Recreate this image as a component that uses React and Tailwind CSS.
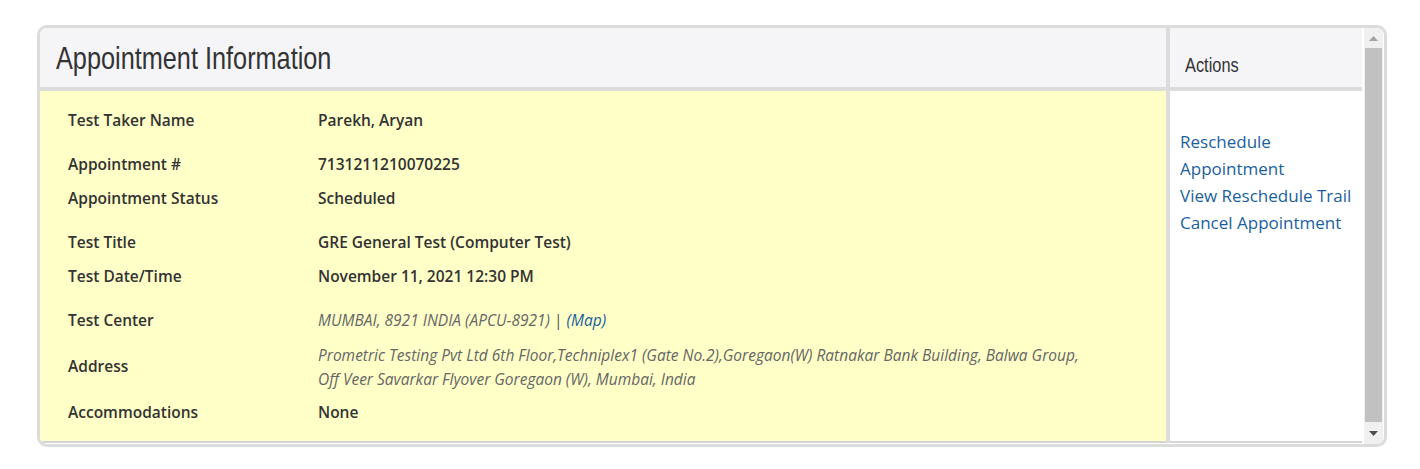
export default function App() {
  const body = { fontFamily: '"Open Sans", "Noto Sans", sans-serif' };
  const cond = { fontFamily: '"Liberation Sans", Arial, sans-serif' };
  const rows = [
    { label: "Test Taker Name", value: "Parekh, Aryan", extra: false },
    { label: "Appointment #", value: "7131211210070225", extra: true },
    { label: "Appointment Status", value: "Scheduled", extra: false },
    { label: "Test Title", value: "GRE General Test (Computer Test)", extra: true },
    { label: "Test Date/Time", value: "November 11, 2021 12:30 PM", extra: false },
  ];
  return (
    <div className="bg-white w-[1420px] h-[469px] pt-[25px] pl-[37px]" style={body}>
      <div className="w-[1350px] border-[3px] border-[#dcdcdc] rounded-[10px] overflow-hidden bg-white">
        <div className="flex h-[416px]">
          {/* left panel */}
          <div className="w-[1126px] flex flex-col">
            <div className="h-[63px] shrink-0 bg-[#f5f5f8] border-b-4 border-[#dcdcdc] flex items-center pl-4">
              <h1 className="text-[32px] text-[#333] leading-none scale-x-[0.79] origin-left whitespace-nowrap" style={cond}>Appointment Information</h1>
            </div>
            <div className="h-[352px] shrink-0 bg-[#ffffc8] border-b-2 border-[#d4d4d4] pt-[13px] pl-7 text-[#333]">
              {rows.map((r) => (
                <div key={r.label} className={`flex h-[34px] items-center ${r.extra ? "mt-[10px]" : ""}`}>
                  <div className="w-[250px] text-[15.5px] font-semibold">{r.label}</div>
                  <div className="text-[15.5px] font-semibold">{r.value}</div>
                </div>
              ))}
              <div className="flex h-[34px] items-center mt-[10px]">
                <div className="w-[250px] text-[15.5px] font-semibold">Test Center</div>
                <div className="text-[15.5px] italic text-[#666]">
                  MUMBAI, 8921 INDIA (APCU-8921) <span className="text-[#555] not-italic">|</span>{" "}
                  <span className="text-[#1a5f9e]">(Map)</span>
                </div>
              </div>
              <div className="flex h-[58px] items-center">
                <div className="w-[250px] text-[15.5px] font-semibold">Address</div>
                <div className="text-[15.5px] italic text-[#666] leading-[24px] whitespace-nowrap">
                  Prometric Testing Pvt Ltd 6th Floor,Techniplex1 (Gate No.2),Goregaon(W) Ratnakar Bank Building, Balwa Group,
                  <br />
                  Off Veer Savarkar Flyover Goregaon (W), Mumbai, India
                </div>
              </div>
              <div className="flex h-[34px] items-center">
                <div className="w-[250px] text-[15.5px] font-semibold">Accommodations</div>
                <div className="text-[15.5px] font-semibold">None</div>
              </div>
            </div>
          </div>
          {/* divider */}
          <div className="w-[4px] bg-[#dcdcdc] h-[415px]"></div>
          {/* right panel */}
          <div className="w-[192px] flex flex-col">
            <div className="h-[63px] shrink-0 bg-[#f5f5f8] border-b-4 border-[#dcdcdc] flex items-center pl-[15px]">
              <span className="text-[21px] text-[#333] leading-none scale-x-[0.78] origin-left whitespace-nowrap mt-[14px]" style={cond}>Actions</span>
            </div>
            <div className="h-[352px] shrink-0 bg-white border-b-2 border-[#d4d4d4] pt-[37px] pl-[10px] text-[17px] leading-[27px] text-[#1a5f9e] flex flex-col items-start">
              <a className="cursor-pointer">Reschedule<br />Appointment</a>
              <a className="cursor-pointer">View Reschedule Trail</a>
              <a className="cursor-pointer">Cancel Appointment</a>
            </div>
          </div>
          {/* scrollbar */}
          <div className="w-[2px] bg-white"></div>
          <div className="w-[19px] bg-[#f0f0f0] flex flex-col items-center">
            <div className="h-[20px] flex items-center justify-center">
              <svg width="9" height="5" viewBox="0 0 9 5"><polygon points="0,5 9,5 4.5,0" fill="#a3a3a3" /></svg>
            </div>
            <div className="flex-1 w-[17px] bg-[#c1c1c1]"></div>
            <div className="h-[22px] flex items-center justify-center">
              <svg width="9" height="5" viewBox="0 0 9 5"><polygon points="0,0 9,0 4.5,5" fill="#505050" /></svg>
            </div>
          </div>
        </div>
      </div>
    </div>
  );
}
